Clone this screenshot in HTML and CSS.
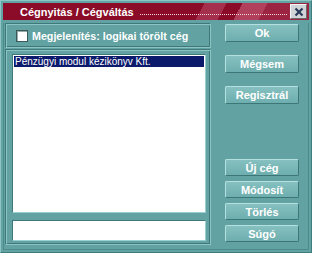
FILE: index.html
```html
<!DOCTYPE html>
<html lang="hu">
<head>
    <meta charset="UTF-8">
    <title>Cégnyitás / Cégváltás</title>
    <link rel="stylesheet" href="styles.css">
</head>
<body>
    <div class="window">
        <div class="titlebar">
            <span class="title-text">Cégnyitás / Cégváltás</span>
            <span class="title-dots"></span>
            <button class="close-btn">
                <svg width="10" height="10" viewBox="0 0 10 10">
                    <path d="M1.5 1.5 L8.5 8.5 M8.5 1.5 L1.5 8.5" stroke="#2a3a5a" stroke-width="2.2"/>
                </svg>
            </button>
        </div>
        <div class="frame">
            <div class="left">
                <div class="panel check-panel">
                    <span class="checkbox"></span>
                    <span class="check-label">Megjelenítés: logikai törölt cég</span>
                </div>
                <div class="panel list-panel">
                    <div class="listbox">
                        <div class="list-item selected">Pénzügyi modul kézikönyv Kft.</div>
                    </div>
                    <div class="inputbox"></div>
                </div>
            </div>
            <div class="right">
                <div class="btn-group">
                    <button class="btn">Ok</button>
                    <button class="btn">Mégsem</button>
                    <button class="btn">Regisztrál</button>
                </div>
                <div class="btn-group bottom">
                    <button class="btn">Új cég</button>
                    <button class="btn">Módosít</button>
                    <button class="btn">Törlés</button>
                    <button class="btn">Súgó</button>
                </div>
            </div>
        </div>
    </div>
</body>
</html>
```

FILE: styles.css
```css
body {
    margin: 0;
    padding: 0;
    background-color: #5d9c9c;
    font-family: "Liberation Sans", Arial, sans-serif;
}

.window {
    width: 312px;
    height: 253px;
    box-sizing: border-box;
    background-color: #62a2a2;
    border: 1px solid #8ec6c6;
    border-right-color: #3f7c7c;
    border-bottom-color: #3f7c7c;
    padding: 2px;
    display: flex;
    flex-direction: column;
}

.titlebar {
    position: relative;
    height: 17px;
    background:
        linear-gradient(118deg, transparent 0 64%, #a5304d 64% 71%, transparent 71% 76%, #b0405b 76% 84%, #9a2441 84% 100%),
        #8a0c28;
    display: flex;
    align-items: center;
    padding-left: 17px;
}

.title-text {
    color: white;
    font-weight: bold;
    font-size: 11px;
    white-space: nowrap;
}

.title-dots {
    flex: 1;
    height: 1px;
    margin: 5px 22px 0 6px;
    background-image: repeating-linear-gradient(90deg, #f0d8de 0 1px, transparent 1px 2px);
}

.close-btn {
    position: absolute;
    right: 2px;
    top: 1px;
    width: 17px;
    height: 15px;
    padding: 0;
    background-color: #d0d4d8;
    border: 1px solid #f4f4f4;
    border-right-color: #6a6a6a;
    border-bottom-color: #6a6a6a;
    display: flex;
    align-items: center;
    justify-content: center;
}

.frame {
    flex: 1;
    margin-top: 3px;
    display: flex;
    gap: 14px;
    border: 1px solid #4d8a8a;
    border-top: none;
    padding: 0 3px 4px 1px;
}

.left {
    width: 206px;
    display: flex;
    flex-direction: column;
    gap: 1px;
}

.panel {
    border: 1px solid #3f7878;
    border-right-color: #8cc4c4;
    border-bottom-color: #8cc4c4;
    box-shadow: inset 1px 1px 0 #8cc4c4, inset -1px -1px 0 #3f7878;
}

.check-panel {
    height: 25px;
    box-sizing: border-box;
    display: flex;
    align-items: center;
    padding-left: 10px;
}

.checkbox {
    width: 10px;
    height: 10px;
    background-color: white;
    border: 1px solid #3a5a5a;
    box-shadow: inset 1px 1px 0 #9aa;
    margin-right: 4px;
}

.check-label {
    color: white;
    font-weight: bold;
    font-size: 10.7px;
}

.list-panel {
    flex: 1;
    display: flex;
    flex-direction: column;
    padding: 4px 4px 3px 6px;
    gap: 7px;
}

.listbox {
    flex: 1;
    background-color: white;
    border: 1px solid #3f7878;
    border-right-color: #9ad0d0;
    border-bottom-color: #9ad0d0;
    padding: 1px;
}

.list-item {
    font-size: 10px;
    height: 11px;
    line-height: 11px;
    padding-left: 1px;
    color: black;
}

.list-item.selected {
    background-color: #0c1a6c;
    color: white;
}

.inputbox {
    height: 19px;
    background-color: white;
    border: 1px solid #3f7878;
    border-right-color: #9ad0d0;
    border-bottom-color: #9ad0d0;
}

.right {
    flex: 1;
    display: flex;
    flex-direction: column;
    justify-content: space-between;
    padding: 1px 0 3px;
}

.btn-group {
    display: flex;
    flex-direction: column;
    gap: 13px;
}

.btn-group.bottom {
    gap: 5px;
}

.btn {
    width: 74px;
    height: 18px;
    padding: 0;
    background: linear-gradient(#86c0c0, #6eaeae);
    border: 1px solid #b4e0e0;
    border-right-color: #3d7676;
    border-bottom-color: #3d7676;
    border-radius: 2px;
    color: white;
    font-family: "Liberation Sans", Arial, sans-serif;
    font-weight: bold;
    font-size: 11px;
}

.btn-group.bottom .btn {
    height: 17px;
}
```
